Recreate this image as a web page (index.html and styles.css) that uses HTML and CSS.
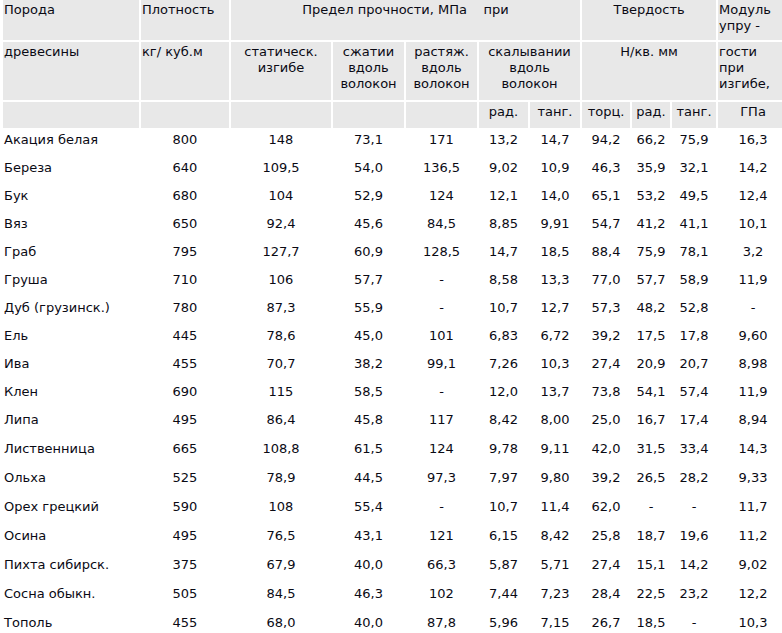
FILE: index.html
```html
<!DOCTYPE html>
<html lang="ru">
<head>
<meta charset="utf-8">
<title>Физико-механические свойства древесины</title>
<link rel="stylesheet" href="styles.css">
</head>
<body>
<table class="wood">
  <colgroup>
    <col class="c1"><col class="c2"><col class="c3"><col class="c4"><col class="c5">
    <col class="c6"><col class="c7"><col class="c8"><col class="c9"><col class="c10"><col class="c11">
  </colgroup>
  <thead>
    <tr class="h1">
      <th class="l">Порода</th>
      <th class="l">Плотность</th>
      <th colspan="5">Предел прочности, МПа&nbsp;&nbsp;&nbsp; при</th>
      <th colspan="3">Твердость</th>
      <th class="l">Модуль<br>упру -</th>
    </tr>
    <tr class="h2">
      <th class="l">древесины</th>
      <th class="l">кг/ куб.м</th>
      <th>статическ.<br>изгибе</th>
      <th>сжатии<br>вдоль<br>волокон</th>
      <th>растяж.<br>вдоль<br>волокон</th>
      <th colspan="2">скалывании<br>вдоль<br>волокон</th>
      <th colspan="3">Н/кв. мм</th>
      <th class="l">гости<br>при<br>изгибе,</th>
    </tr>
    <tr class="h3">
      <th></th><th></th><th></th><th></th><th></th>
      <th>рад.</th><th>танг.</th>
      <th>торц.</th><th>рад.</th><th>танг.</th>
      <th>ГПа</th>
    </tr>
  </thead>
  <tbody>
    <tr><td>Акация белая</td><td>800</td><td>148</td><td>73,1</td><td>171</td><td>13,2</td><td>14,7</td><td>94,2</td><td>66,2</td><td>75,9</td><td>16,3</td></tr>
    <tr><td>Береза</td><td>640</td><td>109,5</td><td>54,0</td><td>136,5</td><td>9,02</td><td>10,9</td><td>46,3</td><td>35,9</td><td>32,1</td><td>14,2</td></tr>
    <tr><td>Бук</td><td>680</td><td>104</td><td>52,9</td><td>124</td><td>12,1</td><td>14,0</td><td>65,1</td><td>53,2</td><td>49,5</td><td>12,4</td></tr>
    <tr><td>Вяз</td><td>650</td><td>92,4</td><td>45,6</td><td>84,5</td><td>8,85</td><td>9,91</td><td>54,7</td><td>41,2</td><td>41,1</td><td>10,1</td></tr>
    <tr><td>Граб</td><td>795</td><td>127,7</td><td>60,9</td><td>128,5</td><td>14,7</td><td>18,5</td><td>88,4</td><td>75,9</td><td>78,1</td><td>3,2</td></tr>
    <tr><td>Груша</td><td>710</td><td>106</td><td>57,7</td><td>-</td><td>8,58</td><td>13,3</td><td>77,0</td><td>57,7</td><td>58,9</td><td>11,9</td></tr>
    <tr><td>Дуб (грузинск.)</td><td>780</td><td>87,3</td><td>55,9</td><td>-</td><td>10,7</td><td>12,7</td><td>57,3</td><td>48,2</td><td>52,8</td><td>-</td></tr>
    <tr><td>Ель</td><td>445</td><td>78,6</td><td>45,0</td><td>101</td><td>6,83</td><td>6,72</td><td>39,2</td><td>17,5</td><td>17,8</td><td>9,60</td></tr>
    <tr><td>Ива</td><td>455</td><td>70,7</td><td>38,2</td><td>99,1</td><td>7,26</td><td>10,3</td><td>27,4</td><td>20,9</td><td>20,7</td><td>8,98</td></tr>
    <tr><td>Клен</td><td>690</td><td>115</td><td>58,5</td><td>-</td><td>12,0</td><td>13,7</td><td>73,8</td><td>54,1</td><td>57,4</td><td>11,9</td></tr>
    <tr class="tall"><td>Липа</td><td>495</td><td>86,4</td><td>45,8</td><td>117</td><td>8,42</td><td>8,00</td><td>25,0</td><td>16,7</td><td>17,4</td><td>8,94</td></tr>
    <tr class="tall"><td>Лиственница</td><td>665</td><td>108,8</td><td>61,5</td><td>124</td><td>9,78</td><td>9,11</td><td>42,0</td><td>31,5</td><td>33,4</td><td>14,3</td></tr>
    <tr class="tall"><td>Ольха</td><td>525</td><td>78,9</td><td>44,5</td><td>97,3</td><td>7,97</td><td>9,80</td><td>39,2</td><td>26,5</td><td>28,2</td><td>9,33</td></tr>
    <tr class="tall"><td>Орех грецкий</td><td>590</td><td>108</td><td>55,4</td><td>-</td><td>10,7</td><td>11,4</td><td>62,0</td><td>-</td><td>-</td><td>11,7</td></tr>
    <tr class="tall"><td>Осина</td><td>495</td><td>76,5</td><td>43,1</td><td>121</td><td>6,15</td><td>8,42</td><td>25,8</td><td>18,7</td><td>19,6</td><td>11,2</td></tr>
    <tr class="tall"><td>Пихта сибирск.</td><td>375</td><td>67,9</td><td>40,0</td><td>66,3</td><td>5,87</td><td>5,71</td><td>27,4</td><td>15,1</td><td>14,2</td><td>9,02</td></tr>
    <tr class="tall"><td>Сосна обыкн.</td><td>505</td><td>84,5</td><td>46,3</td><td>102</td><td>7,44</td><td>7,23</td><td>28,4</td><td>22,5</td><td>23,2</td><td>12,2</td></tr>
    <tr class="tall"><td>Тополь</td><td>455</td><td>68,0</td><td>40,0</td><td>87,8</td><td>5,96</td><td>7,15</td><td>26,7</td><td>18,5</td><td>-</td><td>10,3</td></tr>
  </tbody>
</table>
</body>
</html>
```
FILE: styles.css
```css
html, body {
  margin: 0;
  padding: 0;
  background: #ffffff;
  overflow: hidden;
}

body {
  font-family: "DejaVu Sans", Verdana, sans-serif;
  font-size: 13px;
  line-height: 16px;
  color: #0a0a14;
}

.wood {
  table-layout: fixed;
  border-collapse: separate;
  border-spacing: 2px;
  width: 789px;
  margin: -2px 0 0 1px;
}

.c1 { width: 136px; }
.c2 { width: 88px; }
.c3 { width: 100px; }
.c4 { width: 71px; }
.c5 { width: 71px; }
.c6 { width: 49px; }
.c7 { width: 50px; }
.c8 { width: 48px; }
.c9 { width: 38px; }
.c10 { width: 44px; }
.c11 { width: 70px; }

.wood th,
.wood td {
  padding: 2px 1px 0 1px;
  vertical-align: top;
  text-align: center;
  white-space: nowrap;
  overflow: hidden;
}

.wood th {
  background: #e8e8e8;
  font-weight: normal;
}

.wood th.l {
  text-align: left;
}

.wood td:first-child {
  text-align: left;
}

.h1 { height: 40px; }
.h2 { height: 58px; }
.h3 { height: 26px; }
.wood tbody tr { height: 26px; }
.wood tbody tr.tall { height: 27px; }
```
